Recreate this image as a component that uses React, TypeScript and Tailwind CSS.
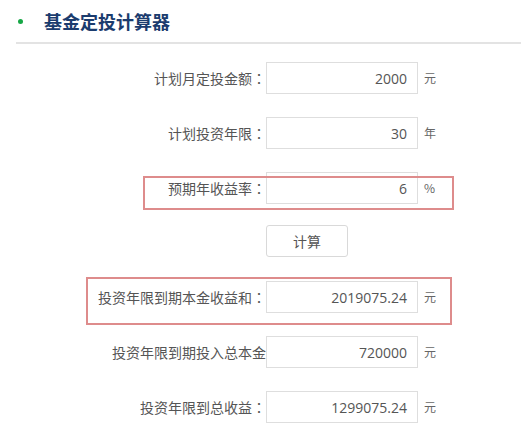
const rows = [
  { label: "计划月定投金额", colon: true, value: "2000", unit: "元" },
  { label: "计划投资年限", colon: true, value: "30", unit: "年" },
  { label: "预期年收益率", colon: true, value: "6", unit: "%" },
];

const results = [
  { label: "投资年限到期本金收益和", colon: true, value: "2019075.24", unit: "元" },
  { label: "投资年限到期投入总本金", colon: false, value: "720000", unit: "元" },
  { label: "投资年限到总收益", colon: true, value: "1299075.24", unit: "元" },
];

type RowProps = { label: string; colon: boolean; value: string; unit: string; mark?: string };

function Row({ label, colon, value, unit, mark }: RowProps) {
  return (
    <div className="relative flex items-center h-8">
      <div className="w-[250px] text-right text-[14px] text-[#555] whitespace-nowrap" style={{ fontFamily: "'Noto Sans CJK SC', sans-serif" }}>
        {label}
        {colon && <span style={{ fontFamily: "'Noto Sans CJK TC', sans-serif" }}>：</span>}
      </div>
      <div className="w-[152px] h-8 border border-[#dedede] bg-white flex items-center justify-end pr-[10px] text-[14px] text-[#555]">
        {value}
      </div>
      <div className="ml-[6px] text-[12px] text-[#666]" style={{ fontFamily: "'Noto Sans CJK SC', sans-serif" }}>{unit}</div>
      {mark && <div className={mark} />}
    </div>
  );
}

export default function App() {
  return (
    <div
      className="w-[521px] h-[443px] bg-white overflow-hidden"
      style={{ fontFamily: "'Open Sans', 'Noto Sans CJK SC', sans-serif" }}
    >
      <div className="pl-4">
        <div className="flex items-center h-[44px] border-b-2 border-[#e3e3e3]">
          <span className="w-[5px] h-[5px] rounded-full bg-[#16a745] ml-[2px]" />
          <h1 className="ml-[21px] text-[18px] font-bold text-[#1b3c6e]" style={{ fontFamily: "'Noto Sans CJK SC', sans-serif" }}>
            基金定投计算器
          </h1>
        </div>
        <div className="mt-[18px] flex flex-col gap-[23px]">
          <Row {...rows[0]} />
          <Row {...rows[1]} />
          <Row
            {...rows[2]}
            mark="absolute left-[127px] top-[4px] w-[311px] h-[34px] border-2 border-[#de8c8c] pointer-events-none"
          />
        </div>
        <div className="mt-[21px] pl-[250px]">
          <button className="w-[82px] h-8 border border-[#d9d9d9] rounded-[3px] bg-white text-[14px] text-[#555]" style={{ fontFamily: "'Noto Sans CJK SC', sans-serif" }}>
            计算
          </button>
        </div>
        <div className="mt-[24px] flex flex-col gap-[23px]">
          <Row
            {...results[0]}
            mark="absolute left-[70px] top-[-4px] w-[366px] h-[48px] border-2 border-[#de8c8c] pointer-events-none"
          />
          <Row {...results[1]} />
          <Row {...results[2]} />
        </div>
      </div>
    </div>
  );
}
